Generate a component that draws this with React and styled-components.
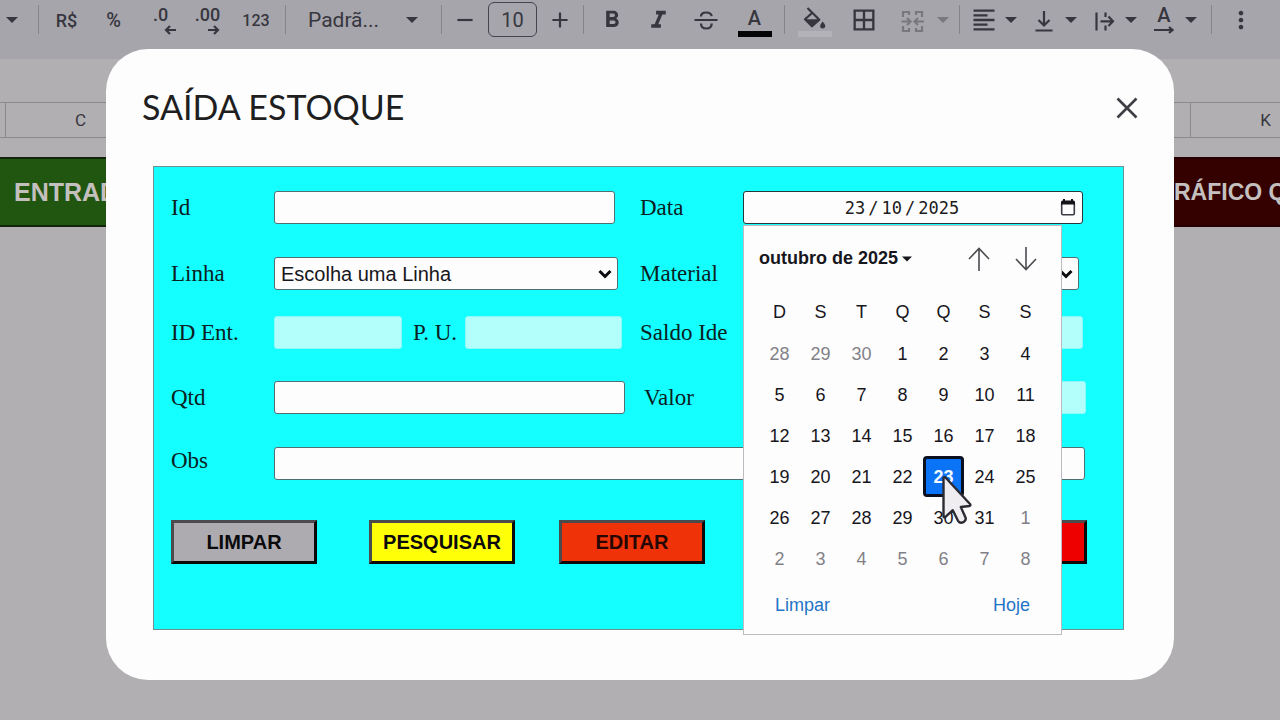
import React from 'react';
import styled, { createGlobalStyle } from 'styled-components';
import {
  MdAdd,
  MdBorderAll,
  MdFormatAlignLeft,
  MdFormatBold,
  MdFormatItalic,
  MdMoreVert,
  MdRemove,
} from 'react-icons/md';

const GlobalStyle = createGlobalStyle`
  * { box-sizing: border-box; }
  body {
    margin: 0;
    background: #b1afb2;
    font-family: "Liberation Sans", Arial, sans-serif;
    overflow: hidden;
  }
  button, input, select { font: inherit; color: inherit; margin: 0; }
`;

const Page = styled.div`
  position: relative;
  min-height: 100vh;
`;

/* ---------- spreadsheet behind the dialog ---------- */

const Toolbar = styled.header`
  display: flex;
  align-items: flex-start;
  height: 59px;
  overflow: hidden;
  background: #a6a5ac;
  color: #37363e;
  font-family: Roboto, sans-serif;
  font-size: 18px;
  font-weight: 500;
`;

const Tool = styled.button`
  display: flex;
  flex: none;
  align-items: center;
  justify-content: center;
  width: ${(p) => p.$w || 47}px;
  height: 40px;
  padding: 0;
  border: 0;
  background: none;
  font-size: ${(p) => p.$size || 18}px;
  opacity: ${(p) => (p.$faded ? 0.4 : 1)};
`;

const Divider = styled.span`
  flex: none;
  width: 1px;
  height: 29px;
  margin: 5px 4px 0;
  background: #85848b;
`;

const CaretCell = styled.span`
  display: flex;
  flex: none;
  align-items: center;
  justify-content: center;
  width: ${(p) => p.$w || 20}px;
  height: 40px;
  margin-right: ${(p) => p.$after || 0}px;
  opacity: ${(p) => (p.$faded ? 0.4 : 1)};
`;

const DropTool = styled.button`
  display: grid;
  flex: none;
  grid-template-columns: 34px 20px;
  align-items: center;
  justify-items: center;
  width: 60px;
  height: 40px;
  padding: 0;
  border: 0;
  background: none;
`;

const DropGroup = styled.div`
  display: flex;
  padding-left: 3px;
`;

const Stacked = styled.span`
  display: flex;
  flex-direction: column;
  align-items: center;
  justify-content: flex-end;
  height: 36px;
  line-height: 22px;
  font-size: 20px;
`;

const Decimals = styled.span`
  display: flex;
  flex-direction: column;
  align-items: flex-end;
  height: 30px;
  line-height: 20px;
  & > svg { margin-right: -8px; }
`;

const DecimalsMore = styled(Decimals)`
  & > svg { margin-right: 0; }
`;

const ColorBar = styled.span`
  width: 34px;
  height: 6px;
  margin: 2px 0 1px;
  background: ${(p) => p.$color};
`;

const FontPicker = styled.label`
  display: flex;
  flex: none;
  align-items: center;
  width: 147px;
  height: 40px;
  padding-left: 18px;
`;

const FontSelect = styled.select`
  appearance: none;
  width: 94px;
  padding: 0;
  border: 0;
  background: none;
  font-size: 21px;
  font-weight: 400;
`;

const SizeInput = styled.input`
  flex: none;
  width: 49px;
  height: 35px;
  margin: 2px 4px 0;
  padding: 0;
  border: 1px solid #45444c;
  border-radius: 6px;
  background: none;
  font-size: 20px;
  font-weight: 400;
  text-align: center;
`;

const ColumnHeads = styled.div`
  display: flex;
  justify-content: space-between;
  height: 36px;
  margin-top: 43px;
  border: solid #8b898d;
  border-width: 1px 0;
  color: #37363e;
  font-family: Roboto, sans-serif;
  font-size: 17px;
  line-height: 34px;
  text-align: center;
`;

const ColumnHead = styled.span`
  width: 150px;
  margin-left: 5px;
  border-left: 1px solid #8b898d;
`;

const LastColumnHead = styled.span`
  width: 90px;
  padding-left: 60px;
  border-left: 1px solid #8b898d;
`;

const SheetButtons = styled.div`
  display: flex;
  justify-content: space-between;
  margin-top: 19px;
`;

const SheetButton = styled.button`
  width: 106px;
  height: 70px;
  padding: 0 0 0 ${(p) => p.$pad}px;
  overflow: hidden;
  border: solid ${(p) => p.$edge};
  border-width: 2px 0;
  background: ${(p) => p.$bg};
  color: #c4c0bf;
  font-size: ${(p) => p.$size}px;
  font-weight: 700;
  text-align: left;
  white-space: nowrap;
`;

/* ---------- dialog ---------- */

const Overlay = styled.div`
  position: absolute;
  inset: 0;
  padding: 49px 106px 40px;
`;

const Dialog = styled.section`
  padding-bottom: 50px;
  border-radius: 42px;
  background: #fdfdfd;
`;

const DialogHead = styled.div`
  display: flex;
  align-items: center;
  justify-content: space-between;
  height: 117px;
  padding: 0 27px 0 36px;
`;

const DialogTitle = styled.h1`
  margin: 0;
  padding-bottom: 2px;
  color: #1f1f22;
  font-family: Lato, sans-serif;
  font-size: 34px;
  font-weight: 400;
`;

const CloseButton = styled.button`
  display: grid;
  place-items: center;
  width: 40px;
  height: 40px;
  padding: 0;
  border: 0;
  background: none;
`;

const Form = styled.form`
  margin: 0 50px 0 47px;
  padding: 24px 14px 65px 17px;
  border: 1px solid #6f8f90;
  background: #14ffff;
`;

const Row = styled.div`
  display: grid;
  grid-template-columns: 103px 1fr 103px 1fr;
  align-items: center;
  margin-bottom: ${(p) => p.$gap}px;
`;

const Label = styled.label`
  padding-left: ${(p) => p.$indent || 0}px;
  color: #0b2022;
  font-family: "Liberation Serif", "Times New Roman", serif;
  font-size: 23px;
  line-height: ${(p) => p.$line || 31}px;
  white-space: nowrap;
`;

const Cell = styled.div`
  position: relative;
  display: flex;
  align-items: center;
  min-width: 0;
  padding-right: ${(p) => p.$inset}px;
  grid-column: ${(p) => (p.$wide ? 'span 3' : 'auto')};
`;

const Input = styled.input`
  flex: ${(p) => (p.$w ? 'none' : '1')};
  width: ${(p) => (p.$w ? `${p.$w}px` : 'auto')};
  min-width: 0;
  height: 33px;
  padding: 0 6px;
  border: 1px solid #4f6f72;
  border-radius: 3px;
  background: #fdfdfd;
  font-size: 19px;
  &:disabled {
    border-color: #8dfafa;
    background: #b2fffb;
  }
`;

const UnitLabel = styled(Label)`
  padding: 0 8px 0 11px;
`;

const TopLabel = styled(Label)`
  align-self: start;
  line-height: 27px;
`;

const SelectWrap = styled.div`
  position: relative;
  flex: 1;
  min-width: 0;
`;

const Select = styled.select`
  appearance: none;
  display: block;
  width: 100%;
  height: 33px;
  padding: 0 28px 0 6px;
  border: 1px solid #4f6f72;
  border-radius: 3px;
  background: #fdfdfd;
  color: #17161c;
  font-size: 20px;
`;

const SelectArrow = styled.svg`
  position: absolute;
  top: 12px;
  right: 6px;
  pointer-events: none;
`;

const Actions = styled.div`
  display: flex;
`;

const Action = styled.button`
  width: 146px;
  height: 44px;
  margin-right: ${(p) => p.$after || 0}px;
  padding: 0;
  border: 3px solid;
  border-color: #4b4a4c #0a0a0a #0a0a0a #4b4a4c;
  background: ${(p) => p.$bg};
  color: ${(p) => p.$ink || '#0b0a0c'};
  font-size: 20px;
  font-weight: 700;
`;

const LastAction = styled(Action)`
  margin-left: auto;
  margin-right: 22px;
`;

/* ---------- date field and calendar ---------- */

const DateBox = styled.div`
  display: flex;
  flex: 1;
  align-items: center;
  height: 33px;
  padding: 0 4px 0 2px;
  border: 1px solid #26363a;
  border-radius: 3px;
  background: #fdfdfd;
  color: #1c1b20;
  font-family: "DejaVu Sans Mono", monospace;
  font-size: 17px;
`;

const DateParts = styled.div`
  display: flex;
  flex: 1;
  justify-content: center;
`;

const DatePart = styled.input`
  width: ${(p) => p.$chars}ch;
  padding: 0;
  border: 0;
  background: none;
  box-sizing: content-box;
`;

const Slash = styled.span`
  padding: 0 3px;
`;

const IconButton = styled.button`
  display: grid;
  place-items: center;
  width: ${(p) => p.$w}px;
  height: ${(p) => p.$h}px;
  padding: 0;
  border: 0;
  background: none;
`;

const Calendar = styled.div`
  position: absolute;
  z-index: 2;
  top: 100%;
  left: 0;
  width: 319px;
  margin-top: 1px;
  padding: 0 15px;
  border: 1px solid #bdbbc1;
  background: #fdfdfd;
  color: #17161c;
  font-size: 18px;
`;

const CalendarHead = styled.div`
  display: flex;
  align-items: center;
  height: 65px;
  gap: 6px;
`;

const MonthButton = styled.button`
  display: flex;
  align-items: center;
  gap: 4px;
  margin-right: auto;
  padding: 0;
  border: 0;
  background: none;
  font-weight: 700;
  white-space: nowrap;
`;

const Days = styled.table`
  width: 100%;
  border-collapse: collapse;
  table-layout: fixed;
`;

const WeekDay = styled.th`
  height: 42px;
  padding: 0;
  font-weight: 400;
`;

const DayCell = styled.td`
  position: relative;
  height: 41px;
  padding: 0;
`;

const Day = styled.button`
  display: block;
  width: 41px;
  height: 41px;
  padding: 2px 0 0;
  border: ${(p) => (p.$selected ? '3px solid #0b1020' : '0')};
  border-radius: 4px;
  background: ${(p) => (p.$selected ? '#0b74f6' : 'none')};
  color: ${(p) => (p.$selected ? '#f4f8ff' : p.$muted ? '#828187' : '#17161c')};
  font-weight: ${(p) => (p.$selected ? 700 : 400)};
`;

const Pointer = styled.svg`
  position: absolute;
  z-index: 3;
  top: 19px;
  left: 18px;
  pointer-events: none;
`;

const CalendarFoot = styled.div`
  display: flex;
  justify-content: space-between;
  height: 55px;
  padding: 15px 16px 0;
`;

const FootButton = styled.button`
  height: 22px;
  padding: 0;
  border: 0;
  background: none;
  color: #2374c6;
`;

/* ---------- drawings ---------- */

const Caret = ({ w = 12 }) => (
  <svg width={w} height="6" viewBox="0 0 12 6" aria-hidden="true">
    <path d="M0 0h12L6 6z" fill="currentColor" />
  </svg>
);

const Stroke = ({ children, w = 28, h = 28 }) => (
  <svg width={w} height={h} viewBox={`0 0 ${w} ${h}`} fill="none" stroke="currentColor" strokeWidth="2.2" aria-hidden="true">
    {children}
  </svg>
);

const ShortArrow = ({ left }) => (
  <Stroke w={12} h={10}>
    <path d={left ? 'M12 5H2M6 1L2 5l4 4' : 'M0 5h10M6 1l4 4-4 4'} />
  </Stroke>
);

const Bucket = () => (
  <svg width="28" height="22" viewBox="0 0 28 22" aria-hidden="true">
    <path d="M6.500 1l5 5M4 12.300l7.300-6.500 7 7-7.300 6.500z" fill="none" stroke="currentColor" strokeWidth="2.200" strokeLinejoin="round" />
    <path d="M4 12.300h14.300l-7.300 7z" fill="currentColor" />
    <path d="M21.700 14.500q2.600 3 2.600 4.300a2.600 2.600 0 0 1-5.200 0q0-1.300 2.600-4.300z" fill="currentColor" />
  </svg>
);

const Chevron = () => (
  <SelectArrow width="14" height="10" viewBox="0 0 14 10" aria-hidden="true">
    <path d="M1.500 2L7 7.500 12.500 2" fill="none" stroke="#0c0c10" strokeWidth="3" />
  </SelectArrow>
);

const weekDays = ['D', 'S', 'T', 'Q', 'Q', 'S', 'S'];
const weeks = [
  [28, 29, 30, 1, 2, 3, 4],
  [5, 6, 7, 8, 9, 10, 11],
  [12, 13, 14, 15, 16, 17, 18],
  [19, 20, 21, 22, 23, 24, 25],
  [26, 27, 28, 29, 30, 31, 1],
  [2, 3, 4, 5, 6, 7, 8],
];

const isOutside = (week, day) => (week === 0 && day > 7) || (week > 3 && day < 9);

function SheetToolbar() {
  return (
    <Toolbar>
      <CaretCell $w={24} $after={10}><Caret /></CaretCell>
      <Divider />
      <Tool type="button">R$</Tool>
      <Tool type="button" $size={20}>%</Tool>
      <Tool type="button" aria-label="Diminuir casas decimais">
        <Decimals>.0<ShortArrow left /></Decimals>
      </Tool>
      <Tool type="button" aria-label="Aumentar casas decimais">
        <DecimalsMore>.00<ShortArrow /></DecimalsMore>
      </Tool>
      <Tool type="button" $w={50} $size={16}>123</Tool>
      <Divider />
      <FontPicker>
        <FontSelect aria-label="Fonte" defaultValue="p"><option value="p">Padrã...</option></FontSelect>
        <CaretCell><Caret /></CaretCell>
      </FontPicker>
      <Divider />
      <Tool type="button" $w={38} aria-label="Diminuir fonte"><MdRemove size={26} /></Tool>
      <SizeInput aria-label="Tamanho da fonte" defaultValue="10" />
      <Tool type="button" $w={38} aria-label="Aumentar fonte"><MdAdd size={26} /></Tool>
      <Divider />
      <Tool type="button" aria-label="Negrito"><MdFormatBold size={28} /></Tool>
      <Tool type="button" aria-label="Itálico"><MdFormatItalic size={29} /></Tool>
      <Tool type="button" aria-label="Tachado">
        <Stroke>
          <path d="M2.500 14h23M9 10.500C9 7.500 11.500 6.500 14.300 6.500s5 1.200 5.400 3.700M9 17.500c0 3.500 2.500 5 5.300 5s5.400-1.500 5.400-5" />
        </Stroke>
      </Tool>
      <Tool type="button" $w={51} aria-label="Cor do texto"><Stacked>A<ColorBar $color="#050507" /></Stacked></Tool>
      <Divider />
      <Tool type="button" $w={51} aria-label="Cor de preenchimento">
        <Stacked><Bucket /><ColorBar $color="#b3b2b8" /></Stacked>
      </Tool>
      <Tool type="button" $w={48} aria-label="Bordas"><MdBorderAll size={28} /></Tool>
      <Tool type="button" $w={48} $faded aria-label="Mesclar células">
        <Stroke>
          <path d="M11 9V6H5v5M5 20v5h6v-3M3.500 15.500H12M9 12l3.500 3.500L9 19M18 9V6h6v5M24 20v5h-6v-3M26 15.500h-8M20 12l-3.500 3.500L20 19" />
        </Stroke>
      </Tool>
      <CaretCell $w={14} $after={5} $faded><Caret /></CaretCell>
      <Divider />
      <DropGroup>
        <DropTool type="button" aria-label="Alinhamento horizontal"><MdFormatAlignLeft size={28} /><Caret /></DropTool>
        <DropTool type="button" aria-label="Alinhamento vertical">
          <Stroke><path d="M14 5v14M8.500 14l5.500 5.500 5.500-5.500M5.500 24.500h17" /></Stroke>
          <Caret />
        </DropTool>
        <DropTool type="button" aria-label="Ajuste de texto">
          <Stroke><path d="M6.500 6.500v18M15.500 6.500v4.500M15.500 19.500v5M10.500 15.300h12M18.500 10.500l4.500 4.800-4.500 4.800" /></Stroke>
          <Caret />
        </DropTool>
        <DropTool type="button" aria-label="Rotação de texto">
          <Decimals as={DecimalsMore}>
            <RotatedLetter />
          </Decimals>
          <Caret />
        </DropTool>
      </DropGroup>
      <Divider />
      <Tool type="button" $w={50} aria-label="Mais"><MdMoreVert size={28} /></Tool>
    </Toolbar>
  );
}

const LetterStack = styled.span`
  display: flex;
  flex-direction: column;
  align-items: center;
  font-size: 20px;
  font-weight: 500;
  line-height: 21px;
`;

function RotatedLetter() {
  return (
    <LetterStack>
      A
      <Stroke w={20} h={8}><path d="M0 4h18M15 1L18.500 4 15 7" /></Stroke>
    </LetterStack>
  );
}

function DatePicker() {
  return (
    <Calendar>
      <CalendarHead>
        <MonthButton type="button">outubro de 2025<Caret w={10} /></MonthButton>
        <IconButton type="button" $w={41} $h={41} aria-label="Mês anterior">
          <svg width="22" height="24" viewBox="0 0 22 24" fill="none" stroke="#4c4b50" strokeWidth="1.600">
            <path d="M11 24V1.500M1 12L11 1.500 21 12" />
          </svg>
        </IconButton>
        <IconButton type="button" $w={41} $h={41} aria-label="Próximo mês">
          <svg width="22" height="24" viewBox="0 0 22 24" fill="none" stroke="#4c4b50" strokeWidth="1.600">
            <path d="M11 0v22.500M1 12l10 10.500L21 12" />
          </svg>
        </IconButton>
      </CalendarHead>
      <Days>
        <thead>
          <tr>{weekDays.map((d, i) => <WeekDay key={i}>{d}</WeekDay>)}</tr>
        </thead>
        <tbody>
          {weeks.map((week, w) => (
            <tr key={w}>
              {week.map((day) => {
                const selected = day === 23;
                return (
                  <DayCell key={day}>
                    <Day type="button" $selected={selected} $muted={isOutside(w, day)}>{day}</Day>
                    {selected && (
                      <Pointer width="32" height="52" viewBox="0 0 32 52" aria-hidden="true">
                        <path
                          d="M2.500 3v38.500q.5 1.500 2 .3l7.300-6.600 5.200 10.600q2 3 5.400 1.400 3.300-2 2-5L19.800 32l8.700-1q1.500-.7.500-2L4.500 2.500q-1.500-1-2 .5z"
                          fill="#efedf0" stroke="#2c2b33" strokeWidth="2.400" strokeLinejoin="round"
                        />
                      </Pointer>
                    )}
                  </DayCell>
                );
              })}
            </tr>
          ))}
        </tbody>
      </Days>
      <CalendarFoot>
        <FootButton type="button">Limpar</FootButton>
        <FootButton type="button">Hoje</FootButton>
      </CalendarFoot>
    </Calendar>
  );
}

export default function App() {
  return (
    <Page>
      <GlobalStyle />
      <SheetToolbar />
      <ColumnHeads>
        <ColumnHead>C</ColumnHead>
        <LastColumnHead>K</LastColumnHead>
      </ColumnHeads>
      <SheetButtons>
        <SheetButton type="button" $bg="#205610" $edge="#12240c" $pad={14} $size={25}>ENTRAD</SheetButton>
        <SheetButton type="button" $bg="#350000" $edge="#260000" $pad={0} $size={23}>RÁFICO Q</SheetButton>
      </SheetButtons>

      <Overlay>
        <Dialog role="dialog" aria-labelledby="dialog-title">
          <DialogHead>
            <DialogTitle id="dialog-title">SAÍDA ESTOQUE</DialogTitle>
            <CloseButton type="button" aria-label="Fechar">
              <svg width="22" height="22" viewBox="0 0 22 22" stroke="#3f3e44" strokeWidth="2.600">
                <path d="M1.500 1.500l19 19M20.500 1.500l-19 19" />
              </svg>
            </CloseButton>
          </DialogHead>
          <Form onSubmit={(e) => e.preventDefault()}>
            <Row $gap={33}>
              <Label htmlFor="id">Id</Label>
              <Cell $inset={25}><Input id="id" /></Cell>
              <Label htmlFor="dia">Data</Label>
              <Cell $inset={26}>
                <DateBox>
                  <DateParts>
                    <DatePart id="dia" $chars={2} defaultValue="23" />
                    <Slash>/</Slash>
                    <DatePart aria-label="Mês" $chars={2} defaultValue="10" />
                    <Slash>/</Slash>
                    <DatePart aria-label="Ano" $chars={4} defaultValue="2025" />
                  </DateParts>
                  <IconButton type="button" $w={20} $h={24} aria-label="Abrir calendário">
                    <svg width="16" height="17" viewBox="0 0 16 17">
                      <path d="M1.700 4v10.500q0 1.200 1.200 1.200h10.200q1.200 0 1.200-1.200V4" fill="none" stroke="#3c3b41" strokeWidth="1.600" />
                      <path d="M1 3q0-1.500 1.500-1.500H3V0h2v1.500h6V0h2v1.500h.5Q15 1.500 15 3v2.500H1z" fill="#141318" />
                    </svg>
                  </IconButton>
                </DateBox>
                <DatePicker />
              </Cell>
            </Row>
            <Row $gap={26}>
              <Label htmlFor="linha">Linha</Label>
              <Cell $inset={22}>
                <SelectWrap>
                  <Select id="linha"><option>Escolha uma Linha</option></Select>
                  <Chevron />
                </SelectWrap>
              </Cell>
              <Label htmlFor="material">Material</Label>
              <Cell $inset={30}>
                <SelectWrap>
                  <Select id="material" />
                  <Chevron />
                </SelectWrap>
              </Cell>
            </Row>
            <Row $gap={32}>
              <Label htmlFor="ident">ID Ent.</Label>
              <Cell $inset={18}>
                <Input id="ident" $w={128} disabled />
                <UnitLabel htmlFor="pu">P. U.</UnitLabel>
                <Input id="pu" disabled />
              </Cell>
              <Label htmlFor="saldo">Saldo Ide</Label>
              <Cell $inset={26}><Input id="saldo" disabled /></Cell>
            </Row>
            <Row $gap={33}>
              <Label htmlFor="qtd">Qtd</Label>
              <Cell $inset={15}><Input id="qtd" /></Cell>
              <Label htmlFor="valor" $indent={4}>Valor</Label>
              <Cell $inset={23}><Input id="valor" disabled /></Cell>
            </Row>
            <Row $gap={40}>
              <TopLabel htmlFor="obs">Obs</TopLabel>
              <Cell $inset={24} $wide><Input id="obs" /></Cell>
            </Row>
            <Actions>
              <Action type="button" $bg="#aeabb0" $after={52}>LIMPAR</Action>
              <Action type="button" $bg="#ffff08" $after={44}>PESQUISAR</Action>
              <Action type="button" $bg="#ef3207" $ink="#260705">EDITAR</Action>
              <LastAction type="button" $bg="#ee0000" aria-label="Excluir" />
            </Actions>
          </Form>
        </Dialog>
      </Overlay>
    </Page>
  );
}
